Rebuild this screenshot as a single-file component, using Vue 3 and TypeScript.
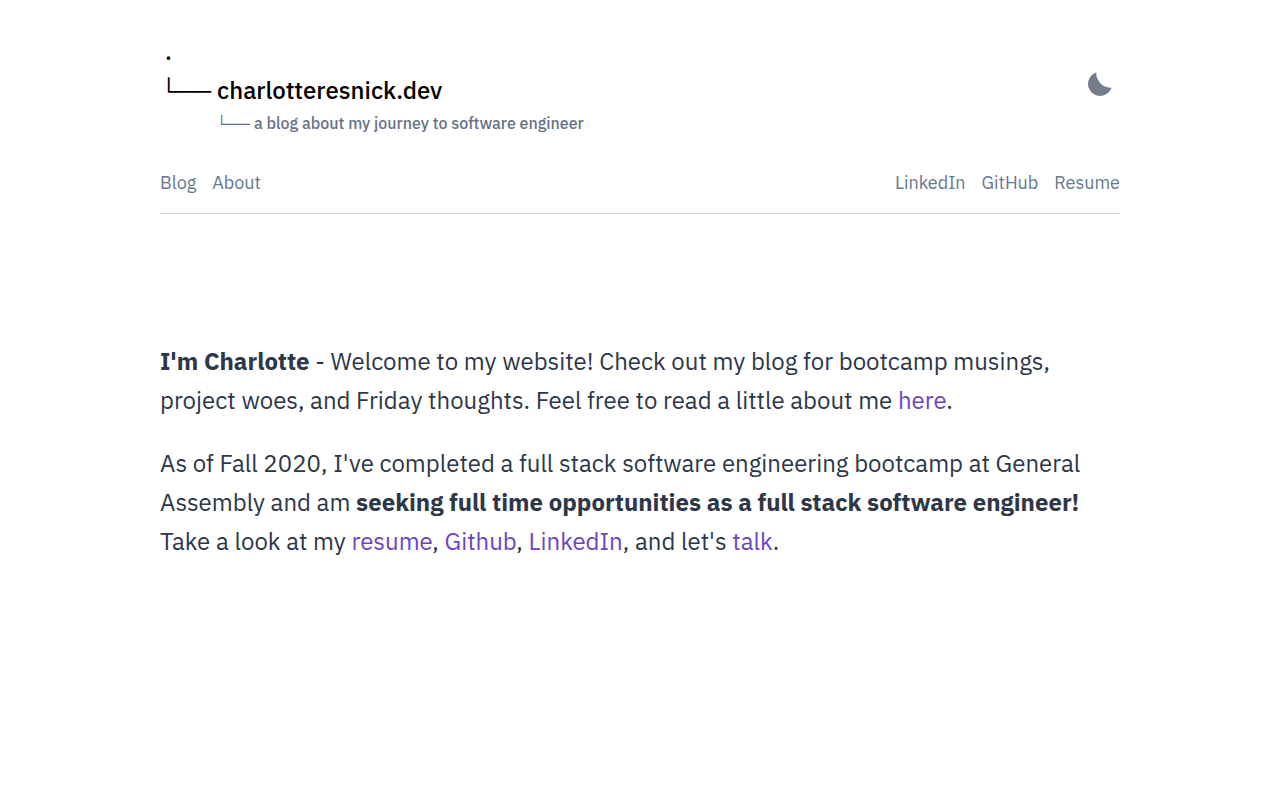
<script setup lang="ts">
interface NavLink {
  label: string
  href: string
}

const pages: NavLink[] = [
  { label: 'Blog', href: '#blog' },
  { label: 'About', href: '#about' },
]

const profiles: NavLink[] = [
  { label: 'LinkedIn', href: '#linkedin' },
  { label: 'GitHub', href: '#github' },
  { label: 'Resume', href: '#resume' },
]
</script>

<template>
  <div class="page">
    <header class="header">
      <div class="masthead">
        <a class="brand" href="#home">
          <span class="root">.</span>
          <span class="title"><span class="branch">└──</span>charlotteresnick.dev</span>
          <span class="tagline"><span class="branch">└──</span>a blog about my journey to software engineer</span>
        </a>
        <button class="theme" type="button" aria-label="Switch to dark mode">
          <svg viewBox="0 0 24 24" width="24" height="24" aria-hidden="true">
            <path d="M8.2 0.4A15 15 0 0 0 23.6 15.8A12.1 12.1 0 1 1 8.2 0.4Z" fill="currentColor" />
          </svg>
        </button>
      </div>
      <nav class="nav">
        <div class="group">
          <a v-for="link in pages" :key="link.label" :href="link.href">{{ link.label }}</a>
        </div>
        <div class="group">
          <a v-for="link in profiles" :key="link.label" :href="link.href">{{ link.label }}</a>
        </div>
      </nav>
    </header>
    <main class="intro">
      <p>
        <strong>I'm Charlotte</strong> - Welcome to my website! Check out my blog for bootcamp musings,
        project woes, and Friday thoughts. Feel free to read a little about me <a href="#about">here</a>.
      </p>
      <p>
        As of Fall 2020, I've completed a full stack software engineering bootcamp at General Assembly and am
        <strong>seeking full time opportunities as a full stack software engineer!</strong>
        Take a look at my <a href="#resume">resume</a>, <a href="#github">Github</a>,
        <a href="#linkedin">LinkedIn</a>, and let's <a href="#talk">talk</a>.
      </p>
    </main>
  </div>
</template>

<style>
body {
  margin: 0;
  background: #fff;
}
</style>

<style scoped>
.page {
  max-width: 960px;
  margin: 0 auto;
  padding: 30px 24px;
  font-family: "IBM Plex Sans", Roboto, "Liberation Sans", sans-serif;
  color: #2d3748;
}

a {
  text-decoration: none;
}

.header {
  border-bottom: 1px solid #cbd5e0;
}

.masthead {
  display: flex;
  align-items: center;
  justify-content: space-between;
}

.brand {
  display: flex;
  flex-direction: column;
  color: #000;
  font-weight: 500;
}

.root {
  padding-left: 5px;
  font-size: 24px;
  line-height: 42px;
}

.title,
.tagline {
  display: flex;
  align-items: baseline;
}

.title {
  gap: 6px;
  font-size: 24px;
  line-height: 36px;
}

.tagline {
  gap: 4px;
  padding-left: 56px;
  font-size: 16px;
  line-height: 28px;
  color: #667288;
}

.branch {
  font-family: "Liberation Sans", sans-serif;
  font-weight: 400;
}

.theme {
  display: flex;
  padding: 8px;
  border: 0;
  background: none;
  color: #757d8d;
  cursor: pointer;
}

.nav {
  display: flex;
  justify-content: space-between;
  padding: 32px 0 18px;
  font-size: 18px;
  line-height: 25px;
}

.group {
  display: flex;
  gap: 16px;
}

.group a {
  color: #667891;
}

.intro {
  margin-top: 128px;
  font-size: 24px;
  line-height: 39px;
}

.intro p {
  margin: 0 0 24px;
}

.intro a {
  color: #6b46c1;
}
</style>
